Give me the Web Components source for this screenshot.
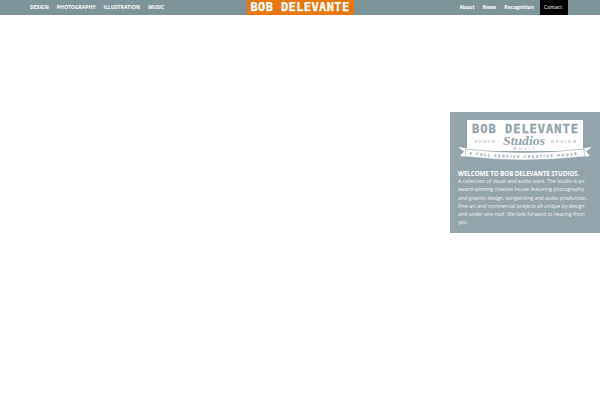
<!DOCTYPE html>
<html>
<head>
<meta charset="utf-8">
<title>Bob Delevante</title>
<style>
  html, body { margin: 0; padding: 0; background: #fff; }
  body { font-family: "Open Sans", sans-serif; overflow: hidden; }
</style>
</head>
<body>
<site-header></site-header>
<intro-panel>
  <studio-logo></studio-logo>
  <h2 slot="title">WELCOME TO BOB DELEVANTE STUDIOS.</h2>
  A collection of visual and audio work. The studio is an award-winning creative house featuring photography and graphic design, songwriting and audio production. Fine art and commercial projects all unique by design and under one roof. We look forward to hearing from you.
</intro-panel>
<script>
class SiteHeader extends HTMLElement {
  connectedCallback() {
    this.attachShadow({ mode: 'open' });
    this.shadowRoot.innerHTML = `
      <style>
        :host {
          display: grid;
          grid-template-columns: 1fr auto 1fr;
          height: 15px;
          background: #7f9499;
          color: #fff;
          font: bold 5px/14px "Open Sans", sans-serif;
        }
        nav { display: flex; }
        .left { padding-left: 30px; gap: 8px; letter-spacing: 0.04px; }
        .right { justify-content: flex-end; padding-right: 32px; }
        .right a { padding: 0 4px; }
        .right a.on {
          box-sizing: border-box;
          width: 28px;
          margin-left: 2px;
          background: #000;
          font-weight: normal;
        }
        .brand {
          width: 107px;
          background: #e8770f;
          text-align: center;
          font: bold 12px/14px "DejaVu Sans Mono", monospace;
          letter-spacing: 0.4px;
          -webkit-text-stroke: 0.25px #fff;
        }
      </style>
      <nav class="left"><a>DESIGN</a><a>PHOTOGRAPHY</a><a>ILLUSTRATION</a><a>MUSIC</a></nav>
      <div class="brand">BOB DELEVANTE</div>
      <nav class="right"><a>About</a><a>News</a><a>Recognition</a><a class="on">Contact</a></nav>
    `;
  }
}

class IntroPanel extends HTMLElement {
  connectedCallback() {
    this.attachShadow({ mode: 'open' });
    this.shadowRoot.innerHTML = `
      <style>
        :host {
          display: block;
          box-sizing: border-box;
          width: 150px;
          height: 121px;
          margin: 97px 0 0 450px;
          padding: 8px 10px 0 8px;
          background: #93a4aa;
          color: #f1f4f5;
          font: 5.1px/8.2px "Open Sans", sans-serif;
        }
        ::slotted(h2) {
          margin: 0;
          color: #fff;
          font: bold 6.1px/7.6px "Open Sans", sans-serif;
          white-space: nowrap;
        }
      </style>
      <slot name="logo"></slot>
      <slot name="title"></slot>
      <slot></slot>
    `;
  }
}

class StudioLogo extends HTMLElement {
  connectedCallback() {
    this.setAttribute('slot', 'logo');
    this.attachShadow({ mode: 'open' });
    this.shadowRoot.innerHTML = `
      <style>
        :host { display: block; height: 49.5px; }
        svg { display: block; overflow: visible; }
        text { fill: #93a4aa; font-family: "DejaVu Sans", sans-serif; }
        .mono { font-family: "DejaVu Sans Mono", monospace; font-weight: bold; stroke: #93a4aa; stroke-width: 0.35; }
        .script { font-family: "Liberation Serif", serif; font-style: italic; font-weight: bold; }
      </style>
      <svg width="134" height="44" viewBox="0 0 134 44">
        <defs><path id="curve" d="M11 34.5Q67 41.5 123 34.5"/></defs>
        <path fill="#fff" d="M9 0H125V31H9Z"/>
        <text class="mono" x="14" y="13" font-size="12" textLength="106">BOB DELEVANTE</text>
        <text x="17" y="22.5" font-size="4.2" textLength="20">PHOTO</text>
        <text x="93" y="22.5" font-size="4.2" textLength="25">DESIGN</text>
        <text class="script" x="45" y="24.5" font-size="13" textLength="42" lengthAdjust="spacingAndGlyphs">Studios</text>
        <text x="55" y="30" font-size="3.8" textLength="22">MUSIC</text>
        <path fill="#fff" d="M0 27L13 29L11 37L2 36L6 31.5Z M134 27L121 29L123 37L132 36L128 31.5Z"/>
        <path fill="#fff" stroke="#93a4aa" stroke-width="0.6" d="M8 29Q67 36 126 29L127 36.5Q67 43.5 7 36.5Z"/>
        <text font-size="3.7" font-weight="bold" textLength="108"><textPath href="#curve">A FULL SERVICE CREATIVE HOUSE</textPath></text>
      </svg>
    `;
  }
}

customElements.define('site-header', SiteHeader);
customElements.define('intro-panel', IntroPanel);
customElements.define('studio-logo', StudioLogo);
</script>
</body>
</html>
